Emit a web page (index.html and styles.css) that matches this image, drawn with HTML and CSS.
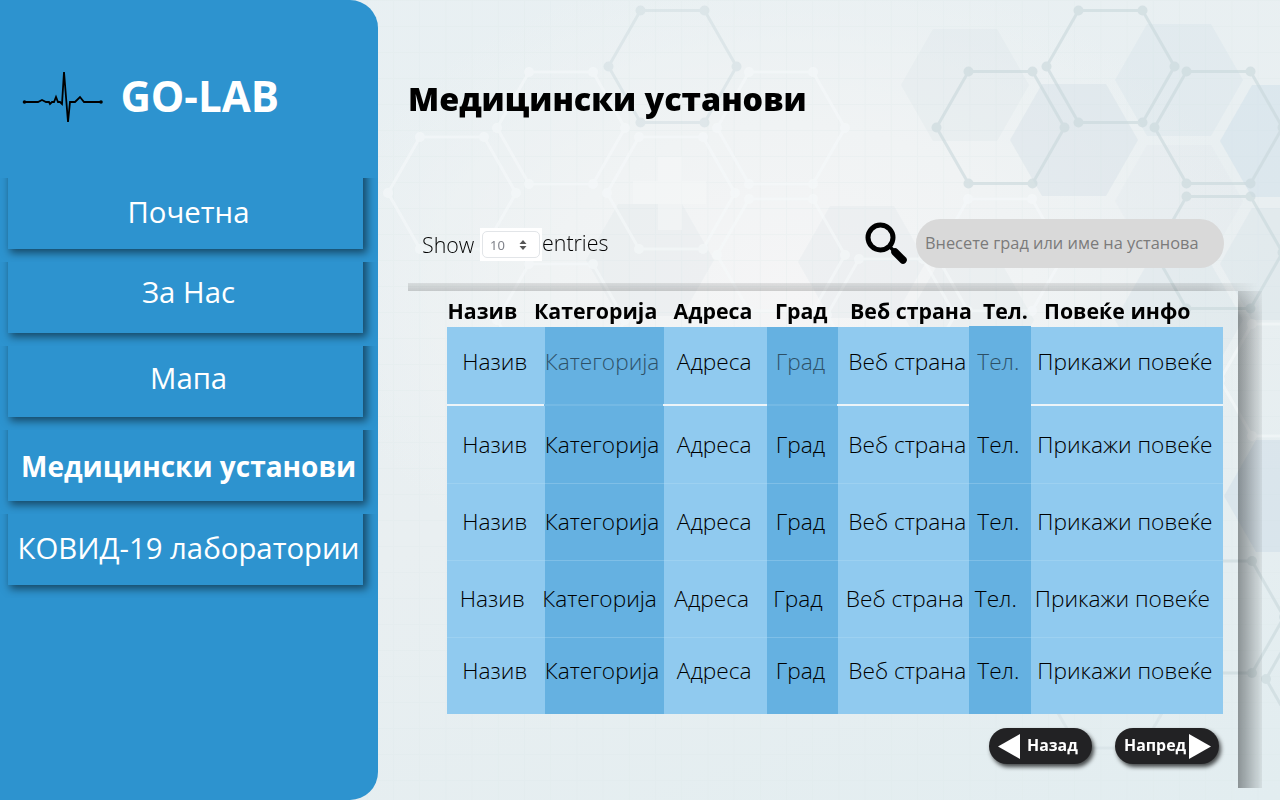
FILE: index.html
```html
<!DOCTYPE html>
<html lang="mk">
<head>
<meta charset="utf-8">
<title>GO-LAB</title>
<link rel="stylesheet" href="styles.css">
</head>
<body>
<div class="app">
  <svg class="backdrop" viewBox="0 0 1280 800" aria-hidden="true">
    <defs>
      <polygon id="hex" points="-64,0 -32,-56 32,-56 64,0 32,56 -32,56"/>
      <g id="mol">
        <polygon points="-64,0 -32,-56 32,-56 64,0 32,56 -32,56" fill="none" stroke-width="3"/>
        <g stroke="none"><circle cx="-64" r="5"/><circle cx="64" r="5"/><circle cx="-32" cy="-56" r="5"/><circle cx="32" cy="-56" r="5"/><circle cx="-32" cy="56" r="5"/><circle cx="32" cy="56" r="5"/></g>
      </g>
      <pattern id="grid" width="26.2" height="26" patternUnits="userSpaceOnUse" x="0" y="0"><path d="M0 .5H27M.5 0V26" stroke="#dce6e9" stroke-opacity=".25" fill="none"/></pattern>
    </defs>
    <rect width="1280" height="800" fill="url(#grid)"/>
    <g fill="#cddbe3" fill-opacity=".33">
      <use href="#hex" x="965" y="85" opacity=".5"/><use href="#hex" x="1074" y="140"/><use href="#hex" x="1179" y="80" opacity=".7"/><use href="#hex" x="1284" y="141" fill="#c3d8e8"/>
      <use href="#hex" x="1179" y="201" opacity=".3"/><use href="#hex" x="650" y="260" opacity=".5"/><use href="#hex" x="862" y="262" opacity=".5"/><use href="#hex" x="970" y="320" opacity=".5"/><use href="#hex" x="1179" y="320" opacity=".8"/><use href="#hex" x="1284" y="264" opacity=".8"/><use href="#hex" x="1288" y="496" fill="#c3d3e3"/>
    </g>
    <path d="M658 157H682V181H706V204H682V230H658V204H633V181H658Z" fill="#f6f7f8" opacity=".5"/>
    <g stroke="#f6f9fa" fill="#f6f9fa" opacity=".6">
      <use href="#mol" x="452" y="193"/><use href="#mol" x="561" y="128"/><use href="#mol" x="671" y="193"/><use href="#mol" x="781" y="128"/><use href="#mol" x="781" y="255"/><use href="#mol" x="561" y="320"/><use href="#mol" x="1000" y="255"/><use href="#mol" x="891" y="315"/><use href="#mol" x="1284" y="380"/>
    </g>
    <g stroke="#c9d7db" fill="#c9d7db" opacity=".6">
      <use href="#mol" x="672.5" y="66.500" opacity=".7"/><use href="#mol" x="1000.5" y="127.500"/><use href="#mol" x="1110.5" y="66.500"/><use href="#mol" x="1218.500" y="127.500"/><use href="#mol" x="1218.500" y="252.500"/><use href="#mol" x="1110" y="692" opacity=".5"/><use href="#mol" x="1220" y="617"/><use href="#mol" x="1330" y="679"/>
    </g>
  </svg>
  <aside class="sidebar">
    <div class="brand">
      <svg class="pulse" viewBox="0 0 84 58"><path d="M3 33H17L21 31L25 33H28L29 35L31 33H33L35 28L37 33H39L41 35L43 3L47 53L49 33H54L59 28L63 33H80" fill="none" stroke="#000" stroke-width="1.8"/><circle cx="3.5" cy="33" r="1.8"/><circle cx="80" cy="33" r="1.8"/></svg>
      <h1 class="logo"><span>GO-LAB</span></h1>
    </div>
    <nav class="menu">
      <a class="item home"><span>Почетна</span></a>
      <a class="item about"><span>За Нас</span></a>
      <a class="item map"><span>Мапа</span></a>
      <a class="item active"><span>Медицински установи</span></a>
      <a class="item covid"><span>КОВИД-19 лаборатории</span></a>
    </nav>
  </aside>
  <main class="content">
    <h2 class="title"><span>Медицински установи</span></h2>
    <div class="tools">
      <span class="show">Show</span>
      <div class="select"><div class="select-box"><span>10</span><svg viewBox="0 0 8 10"><path d="M4 0L7.5 4H.5ZM4 10L.5 6H7.5Z" fill="#555"/></svg></div></div>
      <span class="entries">entries</span>
      <svg class="search" viewBox="0 0 44 44"><circle cx="15.500" cy="15.500" r="12.5" fill="none" stroke="#000" stroke-width="5"/><path d="M24 24L29 29" stroke="#000" stroke-width="3.500"/><path d="M30 30L38 38" stroke="#000" stroke-width="7.500" stroke-linecap="round"/></svg>
      <div class="field"><span>Внесете град или име на установа</span></div>
    </div>
    <section class="panel">
      <div class="shade-top"></div>
      <div class="shade-right"></div>
      <div class="heads"><span class="h1">Назив</span><span class="h2">Категорија</span><span class="h3">Адреса</span><span class="h4">Град</span><span class="h5">Веб страна</span><span class="h6">Тел.</span><span class="h7">Повеќе инфо</span></div>
      <div class="rows">
        <div class="row first"><span>Назив</span><span>Категорија</span><span>Адреса</span><span>Град</span><span>Веб страна</span><span>Тел.</span><span>Прикажи повеќе</span></div>
        <div class="row"><span>Назив</span><span>Категорија</span><span>Адреса</span><span>Град</span><span>Веб страна</span><span>Тел.</span><span>Прикажи повеќе</span></div>
        <div class="row third"><span>Назив</span><span>Категорија</span><span>Адреса</span><span>Град</span><span>Веб страна</span><span>Тел.</span><span>Прикажи повеќе</span></div>
        <div class="row fourth"><span>Назив</span><span>Категорија</span><span>Адреса</span><span>Град</span><span>Веб страна</span><span>Тел.</span><span>Прикажи повеќе</span></div>
        <div class="row fifth"><span>Назив</span><span>Категорија</span><span>Адреса</span><span>Град</span><span>Веб страна</span><span>Тел.</span><span>Прикажи повеќе</span></div>
      </div>
      <div class="pager">
        <button class="btn back"><svg viewBox="0 0 22 25"><path d="M0 12.500L22 0V25Z" fill="#fff"/></svg><span>Назад</span></button>
        <button class="btn next"><span>Напред</span><svg viewBox="0 0 22 25"><path d="M22 12.500L0 0V25Z" fill="#fff"/></svg></button>
      </div>
    </section>
  </main>
</div>
</body>
</html>
```
FILE: styles.css
```css
* { box-sizing: border-box; }
body { margin: 0; font-family: "Open Sans", "Noto Sans", sans-serif; }
h1, h2 { margin: 0; }
.app { position: relative; display: flex; width: 1280px; height: 800px; overflow: hidden; background: radial-gradient(ellipse 480px 330px at 790px 290px, #f5f5f6 0%, #f0f3f4 50%, rgba(232,239,242,0) 100%), linear-gradient(160deg, #e8f0f3, #e9eff1 55%, #e2edf0); }
.backdrop { position: absolute; inset: 0; width: 1280px; height: 800px; }
.sidebar { position: relative; flex: none; width: 377.500px; height: 800px; background: #2d93cf; border-radius: 0 28px 28px 0; overflow: hidden; color: #fff; }
.brand { display: flex; height: 178px; padding: 67px 0 0 21.400px; }
.pulse { width: 84px; height: 58px; margin-top: 2px; }
.logo { margin-left: 15px; font-size: 42.100px; line-height: 58px; font-weight: 700; white-space: nowrap; }
.menu { display: grid; }
.item { position: relative; display: flex; height: 84px; padding-top: 13px; font-size: 29.330px; line-height: 40px; white-space: nowrap; clip-path: inset(0); }
.item::before { content: ""; position: absolute; left: 8px; top: -20px; width: 355px; height: 91px; background: #2d93cf; box-shadow: 3px 3px 8px 1px rgba(0,0,0,.5); }
.item span { position: relative; }
.home { padding-left: 127.500px; padding-top: 14px; }
.about { padding-left: 142px; padding-top: 10px; }
.map { padding-left: 150px; padding-top: 12px; }
.active { padding-left: 21px; padding-top: 16px; font-weight: 700; font-size: 28px; }
.covid { padding-left: 17.500px; padding-top: 14px; }
.content { position: relative; flex: 1; padding: 72px 0 0 30.500px; }
.title { height: 147px; font-size: 32.270px; line-height: 54px; font-weight: 800; white-space: nowrap; }
.tools { display: flex; height: 65px; align-items: flex-start; font-weight: 300; font-size: 21.400px; line-height: 30px; white-space: nowrap; }
.show { width: 58px; margin: 11px 0 0 14px; }
.select { width: 62px; height: 33px; margin-top: 9px; padding: 3px 2px; background: #fff; }
.select-box { display: flex; height: 27px; align-items: center; padding: 0 12px 0 7px; justify-content: space-between; border: 1px solid #e2e5e8; border-radius: 5px; color: #80838b; font-family: "Noto Sans", sans-serif; font-weight: 400; font-size: 13px; }
.select-box svg { width: 8px; height: 10px; }
.entries { flex: none; width: 66px; margin-top: 9px; }
.search { flex: none; width: 44px; height: 44px; margin: 3px 0 0 257px; }
.field { flex: none; width: 308px; height: 49px; margin-left: 7px; padding-left: 9px; background: #d9d9d9; border-radius: 25px; color: #7b7b7b; font-weight: 400; font-size: 16.360px; line-height: 49px; }
.panel { position: relative; width: 854px; height: 504px; padding: 12px 0 0 39.500px; }
.shade-top { position: absolute; left: 0; top: -1px; width: 850px; height: 8px; background: linear-gradient(to bottom, rgba(70,70,70,.12), rgba(40,40,40,.2)); -webkit-mask-image: linear-gradient(to right, #000 94%, transparent); mask-image: linear-gradient(to right, #000 94%, transparent); }
.shade-right { position: absolute; left: 829.500px; top: 7px; width: 24px; height: 497px; background: linear-gradient(to right, rgba(35,40,42,.46), rgba(80,80,80,.09)); -webkit-mask-image: linear-gradient(to bottom, rgba(0,0,0,.45), #000 26px); mask-image: linear-gradient(to bottom, rgba(0,0,0,.45), #000 26px); }
.heads { display: flex; height: 31px; font-size: 21.330px; line-height: 29px; font-weight: 700; white-space: nowrap; }
.heads span { flex: none; }
.h1 { width: 86.500px; } .h2 { width: 139.500px; } .h3 { width: 101.500px; } .h4 { width: 75px; } .h5 { width: 133px; } .h6 { width: 61px; } .h7 { width: 160px; }
.rows { position: relative; width: 776px; height: 387px; margin-left: -.4px; background: linear-gradient(to right, #90caef 97.500px, #65b1e1 97.500px 216.500px, #90caef 216.500px 320px, #65b1e1 320px 391px, #90caef 391px 521.500px, #65b1e1 521.500px 583.500px, #90caef 583.500px); }
.rows::before { content: ""; position: absolute; left: 521.500px; top: -1.500px; width: 62px; height: 2px; background: #65b1e1; }
.row { display: grid; grid-template-columns: 82.500px 132px 99px 72.500px 129px 60px 186px; height: 77px; padding: 22px 0 0 15.200px; font-size: 22.670px; font-weight: 300; line-height: 31px; white-space: nowrap; color: #000; border-bottom: 1px solid rgba(190,225,245,.3); }
.first { height: 80px; padding-top: 19px; border: 0; background: linear-gradient(to right, #edf4f8 97px, #74b9e4 97px 216px, #edf4f8 216px 320px, #74b9e4 320px 390.500px, #edf4f8 390.500px 521.500px, #65b1e1 521.500px 583.500px, #edf4f8 583.500px) 0 77px / 100% 2px no-repeat; }
.first span:nth-child(2), .first span:nth-child(4), .first span:nth-child(6) { opacity: .55; }
.fourth { padding-left: 12.700px; }
.fifth { height: 76px; padding-top: 17px; border: 0; }
.pager { display: flex; gap: 23px; padding: 14px 0 0 541px; }
.btn { display: flex; flex: none; align-items: center; width: 103.500px; height: 36px; padding: 0 0 0 9px; border: 0; border-radius: 19px; background: #222224; box-shadow: 2px 3px 4px rgba(0,0,0,.7); color: #fff; font: 700 15.900px "Open Sans", sans-serif; white-space: nowrap; }
.btn span { position: relative; top: -1px; }
.btn svg { flex: none; width: 22px; height: 25px; }
.back span { margin-left: 7.500px; }
.next svg { margin-left: 3px; }
```
